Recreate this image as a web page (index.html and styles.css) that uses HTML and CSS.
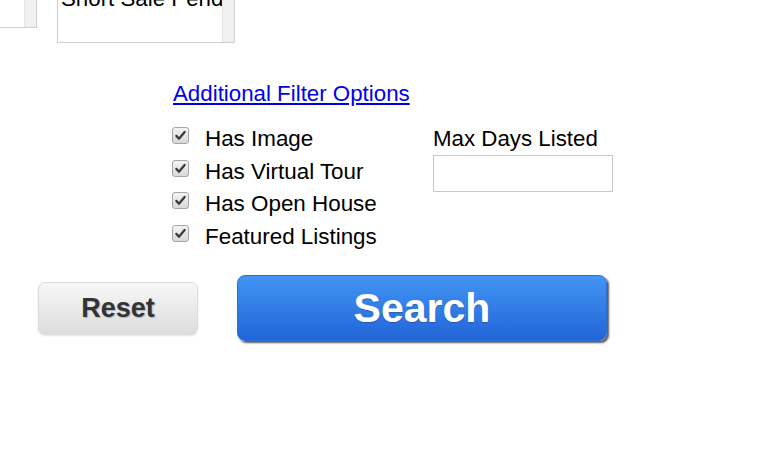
FILE: index.html
```html
<!DOCTYPE html>
<html>
<head>
<meta charset="utf-8">
<link rel="stylesheet" href="styles.css">
</head>
<body>
<div class="page">
  <div class="top-row">
    <div class="listbox listbox-a">
      <div class="lb-content"></div>
      <div class="lb-scroll"></div>
    </div>
    <div class="listbox listbox-b">
      <div class="lb-content"><div class="lb-option">Short Sale Pend</div></div>
      <div class="lb-scroll"></div>
    </div>
  </div>

  <div class="filters">
    <a class="filter-link" href="#">Additional Filter Options</a>
    <div class="filter-grid">
      <div class="checks">
        <div class="check-row"><span class="cb"><svg viewBox="0 0 16 16" width="16" height="16"><path d="M3.6 8.4 L6.4 11.4 L12.4 4.2" fill="none" stroke="#3a3a3a" stroke-width="2.4" stroke-linecap="round" stroke-linejoin="round"/></svg></span><span class="check-label">Has Image</span></div>
        <div class="check-row"><span class="cb"><svg viewBox="0 0 16 16" width="16" height="16"><path d="M3.6 8.4 L6.4 11.4 L12.4 4.2" fill="none" stroke="#3a3a3a" stroke-width="2.4" stroke-linecap="round" stroke-linejoin="round"/></svg></span><span class="check-label">Has Virtual Tour</span></div>
        <div class="check-row"><span class="cb"><svg viewBox="0 0 16 16" width="16" height="16"><path d="M3.6 8.4 L6.4 11.4 L12.4 4.2" fill="none" stroke="#3a3a3a" stroke-width="2.4" stroke-linecap="round" stroke-linejoin="round"/></svg></span><span class="check-label">Has Open House</span></div>
        <div class="check-row"><span class="cb"><svg viewBox="0 0 16 16" width="16" height="16"><path d="M3.6 8.4 L6.4 11.4 L12.4 4.2" fill="none" stroke="#3a3a3a" stroke-width="2.4" stroke-linecap="round" stroke-linejoin="round"/></svg></span><span class="check-label">Featured Listings</span></div>
      </div>
      <div class="max-days">
        <div class="field-label">Max Days Listed</div>
        <div class="text-input"></div>
      </div>
    </div>
  </div>

  <div class="button-row">
    <button class="btn-reset">Reset</button>
    <button class="btn-search">Search</button>
  </div>
</div>
</body>
</html>
```

FILE: styles.css
```css
html, body {
  margin: 0;
  padding: 0;
  background: #ffffff;
}

.page {
  width: 780px;
  height: 450px;
  overflow: hidden;
  font-family: "Liberation Sans", Arial, sans-serif;
  color: #000;
}

.top-row {
  display: flex;
  align-items: flex-start;
  gap: 20px;
  margin-top: -12px;
}

.listbox {
  display: flex;
  background: #fff;
  box-sizing: border-box;
}

.listbox-a {
  width: 37px;
  height: 40px;
  border-right: 1px solid #cfcfcf;
  border-bottom: 1px solid #cfcfcf;
}

.listbox-b {
  width: 178px;
  height: 55px;
  border: 1px solid #cfcfcf;
}

.lb-content {
  flex: 1;
  overflow: hidden;
}

.lb-option {
  font-size: 22.3px;
  line-height: 25px;
  padding: 0 0 0 3px;
  margin-top: -3px;
  white-space: nowrap;
}

.lb-scroll {
  width: 11px;
  background: #f0f0f0;
  border-left: 1px solid #e6e6e6;
}

.filters {
  margin-left: 172px;
  margin-top: 38px;
}

.filter-link {
  display: block;
  margin-left: 1px;
  font-size: 22.3px;
  line-height: 25px;
  color: #0000ee;
  text-decoration: underline;
}

.filter-grid {
  display: flex;
  margin-top: 17px;
}

.checks {
  width: 261px;
}

.check-row {
  display: flex;
  align-items: flex-start;
  height: 32.5px;
  font-size: 22.4px;
  line-height: 31.5px;
}

.cb {
  width: 17px;
  height: 17px;
  margin-top: 4px;
  box-sizing: border-box;
  border: 1px solid #a6a6a6;
  border-radius: 3px;
  background: linear-gradient(#f4f4f4, #d8d8d8);
  display: flex;
  align-items: center;
  justify-content: center;
}

.cb svg {
  display: block;
  width: 15px;
  height: 15px;
}

.check-label {
  margin-left: 16px;
  white-space: nowrap;
}

.max-days {
  display: flex;
  flex-direction: column;
}

.field-label {
  font-size: 22.3px;
  line-height: 31px;
  white-space: nowrap;
}

.text-input {
  width: 180px;
  height: 37px;
  margin-top: 1px;
  box-sizing: border-box;
  border: 1px solid #c8c8c8;
  background: #fff;
}

.button-row {
  display: flex;
  align-items: center;
  gap: 39px;
  margin-left: 38px;
  margin-top: 22px;
}

.btn-reset {
  width: 160px;
  height: 53px;
  box-sizing: border-box;
  border: 1px solid #dcdcdc;
  border-radius: 7px;
  background: linear-gradient(#f7f7f7, #dddddd);
  box-shadow: 0 1px 2px rgba(0, 0, 0, 0.12);
  font-family: "Liberation Sans", Arial, sans-serif;
  font-weight: bold;
  font-size: 27px;
  color: #333;
  text-shadow: 1px 1px 1px rgba(60, 80, 120, 0.35);
  padding: 0;
  padding-top: 1px;
}

.btn-search {
  width: 370px;
  height: 66px;
  box-sizing: border-box;
  border: 1px solid #2b6fd6;
  border-radius: 8px;
  background: linear-gradient(#4295f4, #2165d8);
  box-shadow: 2px 2px 2px rgba(0, 0, 0, 0.65);
  font-family: "Liberation Sans", Arial, sans-serif;
  font-weight: bold;
  font-size: 41px;
  color: #fff;
  text-shadow: 0 1px 1px rgba(0, 0, 0, 0.2);
  padding: 0;
  padding-top: 1px;
}
```
